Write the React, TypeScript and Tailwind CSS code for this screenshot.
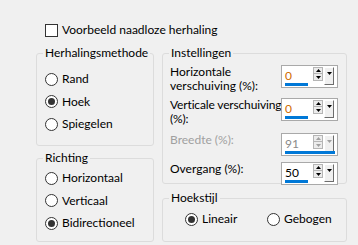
import React from 'react';

function Radio({ label, checked }: { label: string; checked?: boolean }) {
  return (
    <div className="flex items-center h-4">
      <span className="w-[13px] h-[13px] rounded-full border border-[#333333] bg-white flex items-center justify-center shrink-0">
        {checked && <span className="w-[7px] h-[7px] rounded-full bg-[#333333]" />}
      </span>
      <span className="ml-[4px] whitespace-nowrap">{label}</span>
    </div>
  );
}

function Spin({
  value,
  disabled,
  orange,
  barWidth,
}: {
  value: string;
  disabled?: boolean;
  orange?: boolean;
  barWidth: string;
}) {
  const arrow = disabled ? '#a0a0a0' : '#000000';
  return (
    <div className="relative w-[57px] h-[23px] border border-[#a9a9a9] bg-white flex shrink-0">
      <div
        className={
          'w-[31px] pl-[3px] pt-[3px] leading-[14px] text-[12px] ' +
          (disabled ? 'text-[#8a8a8a]' : orange ? 'text-[#d06c00]' : 'text-black')
        }
      >
        {value}
      </div>
      {/* up/down */}
      <div className="flex flex-col mt-[1px] w-[10px]">
        <div className="h-[7px] border border-[#b5b5b5] bg-[#ececec] flex items-center justify-center">
          <svg width="5" height="3" viewBox="0 0 5 3">
            <path d="M2.5 0 L5 3 L0 3 Z" fill={arrow} />
          </svg>
        </div>
        <div className="h-[7px] border border-t-0 border-[#b5b5b5] bg-[#ececec] flex items-center justify-center">
          <svg width="5" height="3" viewBox="0 0 5 3">
            <path d="M0 0 L5 0 L2.5 3 Z" fill={arrow} />
          </svg>
        </div>
      </div>
      {/* drop button */}
      <div className="ml-[1px] mt-[1px] w-[10px] h-[18px] bg-[#f0f0f0] border-l border-t border-l-white border-t-white border-r border-b border-r-[#6d6d6d] border-b-[#6d6d6d] flex justify-center pt-[4px]">
        <svg width="5" height="3" viewBox="0 0 5 3">
          <path d="M0 0 L5 0 L2.5 3 Z" fill={arrow} />
        </svg>
      </div>
      <div className={'absolute left-[3px] bottom-[1px] h-[3px] bg-[#0078d7] ' + barWidth} />
    </div>
  );
}

function Group({
  title,
  className,
  children,
}: {
  title: string;
  className: string;
  children: React.ReactNode;
}) {
  return (
    <fieldset className={'min-w-0 p-0 m-0 border border-[#dcdcdc] rounded-[3px] ' + className}>
      <legend className="ml-[6px] px-[2px] leading-4">{title}</legend>
      {children}
    </fieldset>
  );
}

export default function App() {
  return (
    <div className="w-[358px] h-[245px] bg-[#f0f0f0] pl-[36px] pt-[22px] text-[12px] text-black font-['Lato',sans-serif] overflow-hidden">
      {/* top checkbox */}
      <div className="flex items-center h-4 ml-[9px]">
        <span className="w-[13px] h-[13px] border border-[#333333] bg-white" />
        <span className="ml-[4px]">Voorbeeld naadloze herhaling</span>
      </div>

      <div className="flex mt-[7px]">
        {/* left column */}
        <div className="flex flex-col w-[118px]">
          <Group title="Herhalingsmethode" className="h-[101px]">
            <div className="flex flex-col gap-[6.5px] pl-[8px] pt-[10px]">
              <Radio label="Rand" />
              <Radio label="Hoek" checked />
              <Radio label="Spiegelen" />
            </div>
          </Group>
          <Group title="Richting" className="h-[92px] mt-[4px]">
            <div className="flex flex-col gap-[6.5px] pl-[8px] pt-[4px]">
              <Radio label="Horizontaal" />
              <Radio label="Verticaal" />
              <Radio label="Bidirectioneel" checked />
            </div>
          </Group>
        </div>

        {/* right column */}
        <div className="flex flex-col w-[185px] ml-[8px]">
          <Group title="Instellingen" className="h-[139px]">
            <div className="pl-[7px] pr-[8px] pt-[4px]">
              <div className="flex items-start">
                <div className="flex-1 min-w-0 leading-[14px]">
                  Horizontale
                  <br />
                  verschuiving (%):
                </div>
                <Spin value="0" orange barWidth="w-[23px]" />
              </div>
              <div className="flex items-start mt-[5px]">
                <div className="flex-1 min-w-0 leading-[14px] whitespace-nowrap tracking-[-0.15px]">
                  Verticale verschuiving
                  <br />
                  (%):
                </div>
                <Spin value="0" orange barWidth="w-[23px]" />
              </div>
              <div className="flex items-start mt-[7px]">
                <div className="flex-1 min-w-0 leading-[14px] text-[#a0a0a0]">Breedte (%):</div>
                <Spin value="91" disabled barWidth="w-[50px]" />
              </div>
              <div className="flex items-start mt-[6px]">
                <div className="flex-1 min-w-0 leading-[14px]">Overgang (%):</div>
                <Spin value="50" barWidth="w-[23px]" />
              </div>
            </div>
          </Group>
          <Group title="Hoekstijl" className="h-[52px] mt-[6px]">
            <div className="flex pl-[22px] pt-[5px]">
              <div className="w-[82px]">
                <Radio label="Lineair" checked />
              </div>
              <Radio label="Gebogen" />
            </div>
          </Group>
        </div>
      </div>
    </div>
  );
}
